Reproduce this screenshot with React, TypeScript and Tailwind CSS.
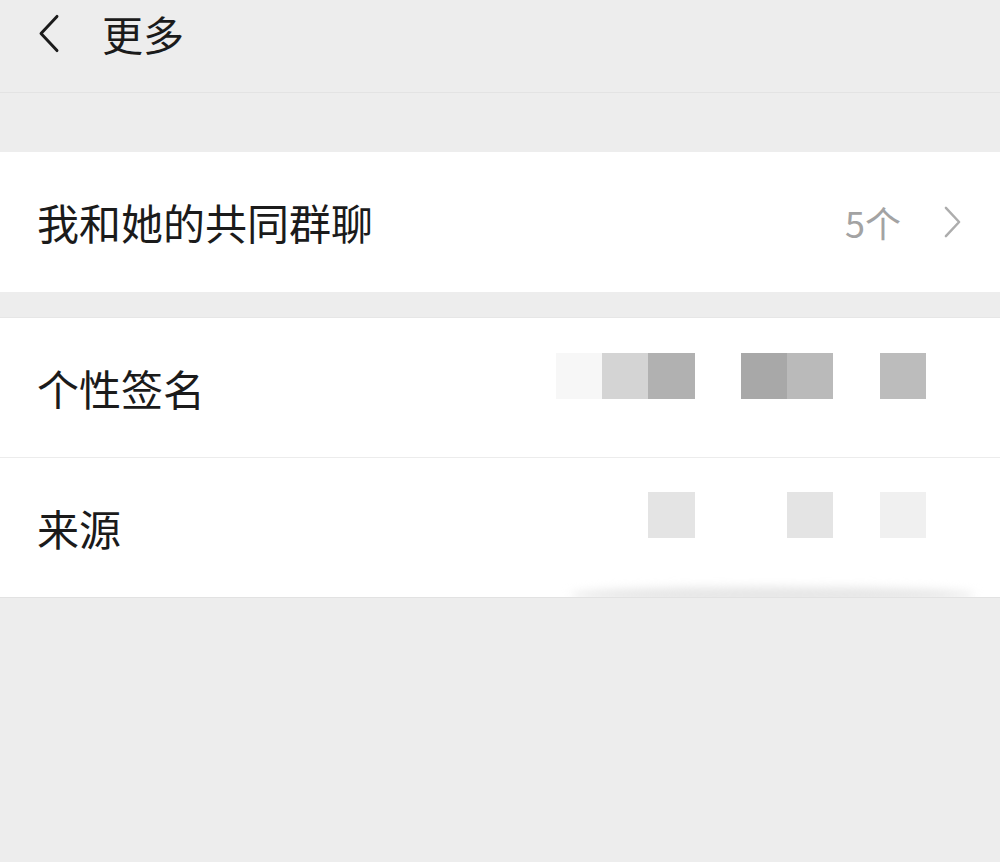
import React from 'react';

const FONT = '[font-family:"Noto_Sans_CJK_SC","Noto_Sans",sans-serif]';

// Mosaic cells (blurred profile values), 46px squares on an 8-column grid.
const signature = ['#f7f7f7', '#d4d4d4', '#b1b1b1', null, '#a8a8a8', '#bababa', null, '#bcbcbc'];
const source = [null, null, '#e4e4e4', null, null, '#e4e4e4', null, '#f0f0f0'];

function Mosaic({ cells }: { cells: (string | null)[] }) {
  return (
    <div className="grid grid-cols-[repeat(8,46.3px)] h-[46px]">
      {cells.map((c, i) => (
        <div key={i} className="h-[46px]" style={{ background: c ?? 'transparent' }} />
      ))}
    </div>
  );
}

function Chevron({ className }: { className?: string }) {
  return (
    <svg viewBox="0 0 20 36" className={className} fill="none" stroke="currentColor" strokeWidth={2.6} strokeLinecap="round" strokeLinejoin="round">
      <path d="M3 3 L17 18 L3 33" />
    </svg>
  );
}

export default function App() {
  return (
    <div className={`w-[1000px] h-[862px] bg-[#ededed] ${FONT} text-[#1b1b1b]`}>
      <header className="h-[93px] flex items-start border-b border-[#e3e3e3]">
        <div className="flex items-center h-[66px] pl-[37px]">
          <Chevron className="w-[24px] h-[41px] rotate-180 text-[#1b1b1b]" />
          <span className="ml-[41px] text-[41px] leading-none">更多</span>
        </div>
      </header>

      <div className="h-[59px]" />

      <section className="bg-white h-[140px] flex items-center pl-[37px] pr-[38px]">
        <span className="text-[42px] leading-none">我和她的共同群聊</span>
        <div className="ml-auto flex items-center text-[#a3a3a3]">
          <span className="text-[36px] leading-none">5个</span>
          <Chevron className="ml-[42px] w-[19px] h-[34px] text-[#adadad]" />
        </div>
      </section>

      <div className="h-[26px] border-b border-[#e6e6e6]" />

      <section className="bg-white relative overflow-hidden border-b border-[#e2e2e2]">
        <div className="h-[140px] flex items-center pl-[37px] border-b border-[#ececec]">
          <span className="text-[42px] leading-none">个性签名</span>
          <div className="ml-auto mr-[74px] mt-[-24px]">
            <Mosaic cells={signature} />
          </div>
        </div>
        <div className="h-[139px] flex items-center pl-[37px]">
          <span className="text-[42px] leading-none">来源</span>
          <div className="ml-auto mr-[74px] mt-[-26px]">
            <Mosaic cells={source} />
          </div>
        </div>
        {/* soft shadow left by the screenshot along the card's lower edge */}
        <div className="absolute left-[570px] right-[25px] bottom-[-6px] h-[16px] rounded-[50%] bg-[#e6e6e6] blur-[5px]" />
      </section>
    </div>
  );
}
